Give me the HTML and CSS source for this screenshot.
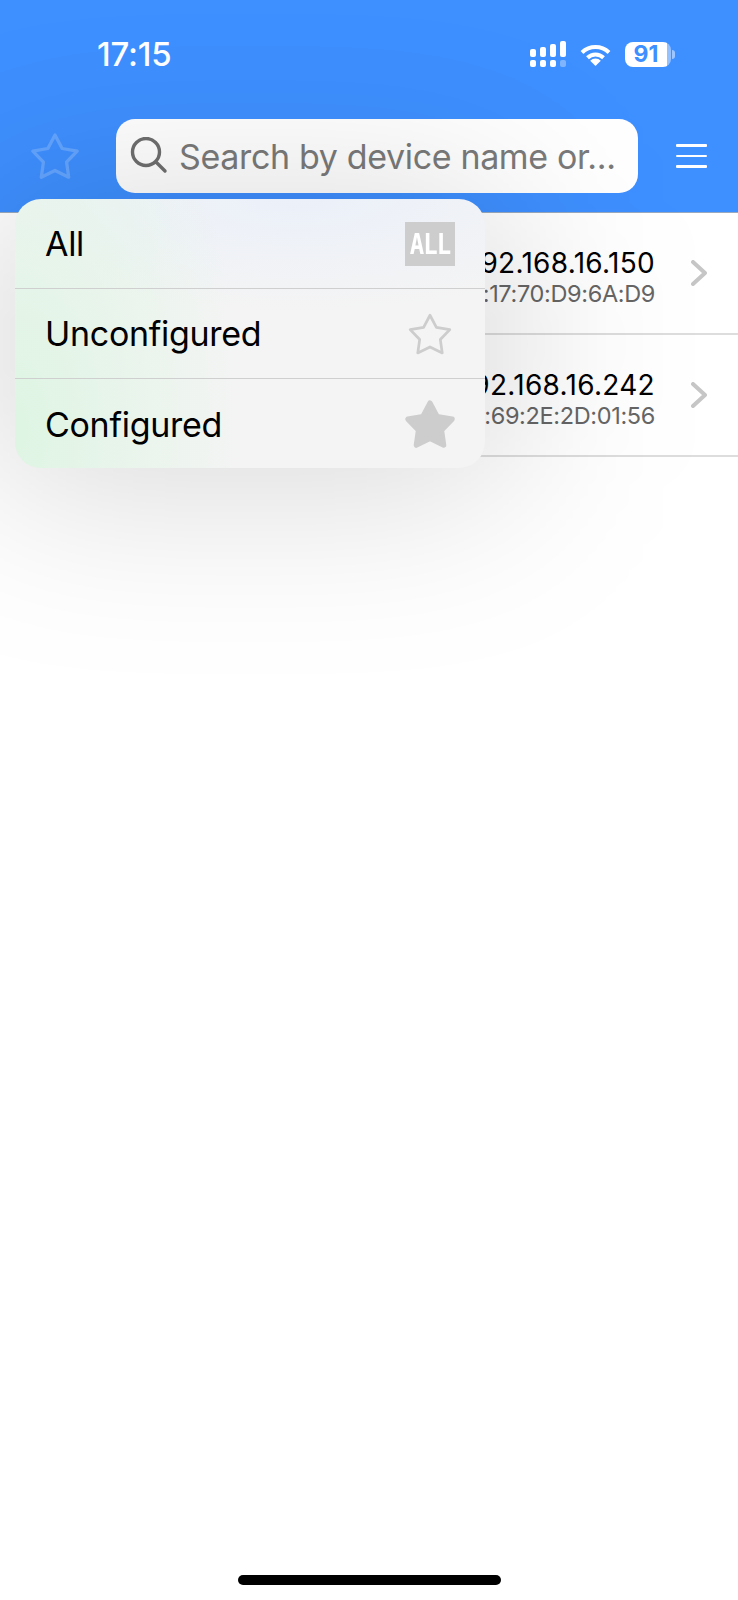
FILE: index.html
```html
<!DOCTYPE html>
<html lang="en">
<head>
  <meta charset="UTF-8" />
  <meta name="viewport" content="width=device-width, initial-scale=1.0" />
  <title>Devices</title>
  <link rel="stylesheet" href="styles.css">
</head>
<body>

<div class="screen">

  <header class="topbar">
    <div class="status">
      <span class="time">17:15</span>
      <div class="status-icons">
        <div class="signal">
          <div class="sig-col"><i class="bar b1"></i><i class="dot"></i></div>
          <div class="sig-col"><i class="bar b2"></i><i class="dot"></i></div>
          <div class="sig-col"><i class="bar b3"></i><i class="dot"></i></div>
          <div class="sig-col"><i class="bar b4"></i><i class="dot off"></i></div>
        </div>
        <svg class="wifi" viewBox="0 0 31 23">
          <path d="M2 9.5A19.5 19.5 0 0 1 29 9.5" />
          <path d="M7.5 14.8A11.5 11.5 0 0 1 23.5 14.8" />
          <path class="wedge" d="M15.5 23L10.2 17.8A7.5 7.5 0 0 1 20.8 17.8Z" />
        </svg>
        <div class="battery"><span>91</span></div>
      </div>
    </div>

    <div class="toolbar">
      <svg class="star-btn" viewBox="0 0 24 24">
        <polygon points="12,3 15.06,8.79 21.51,9.91 16.95,14.61 17.88,21.09 12,18.2 6.12,21.09 7.05,14.61 2.49,9.91 8.94,8.79" />
      </svg>
      <div class="search">
        <svg class="search-icon" viewBox="0 0 38 38">
          <circle cx="16" cy="15" r="13.5" />
          <path d="M26 25L35 34" />
        </svg>
        <span class="placeholder">Search by device name or...</span>
      </div>
      <div class="burger"><i></i><i></i><i></i></div>
    </div>
  </header>

  <!-- device list, the start of each row sits behind the menu -->
  <main class="devices">
    <div class="device">
      <div class="device-info">
        <div class="ip">192.168.16.150</div>
        <div class="mac">:17:70:D9:6A:D9</div>
      </div>
      <svg class="chevron" viewBox="0 0 16 26"><path d="M2 2L14 13L2 24" /></svg>
    </div>
    <div class="device">
      <div class="device-info">
        <div class="ip">192.168.16.242</div>
        <div class="mac">:69:2E:2D:01:56</div>
      </div>
      <svg class="chevron" viewBox="0 0 16 26"><path d="M2 2L14 13L2 24" /></svg>
    </div>
  </main>

  <div class="home-bar"></div>

  <!-- filter popup -->
  <div class="menu-shadow"></div>
  <div class="menu">
    <div class="menu-row">
      <span>All</span>
      <span class="all-icon"><span>ALL</span></span>
    </div>
    <div class="menu-row">
      <span>Unconfigured</span>
      <svg class="star-outline" viewBox="0 0 24 24">
        <polygon points="12,3 15.06,8.79 21.51,9.91 16.95,14.61 17.88,21.09 12,18.2 6.12,21.09 7.05,14.61 2.49,9.91 8.94,8.79" />
      </svg>
    </div>
    <div class="menu-row">
      <span>Configured</span>
      <svg class="star-solid" viewBox="0 0 24 24">
        <polygon points="12,3 15.06,8.79 21.51,9.91 16.95,14.61 17.88,21.09 12,18.2 6.12,21.09 7.05,14.61 2.49,9.91 8.94,8.79" />
      </svg>
    </div>
  </div>

</div>

</body>
</html>
```

FILE: styles.css
```css
*       { box-sizing:border-box; margin:0; padding:0; }
body    { font-family:Inter,'Noto Sans',sans-serif; background:#fff; color:#000; }
.screen { position:relative; display:flex; flex-direction:column; height:1600px; overflow:hidden; }

/* top bar */
.topbar { height:213px; background:#3e8fff; border-bottom:1px solid #9aa9bd; }
.status { display:flex; justify-content:space-between; align-items:center; height:110px; padding:0 67px 2px 97px; }
.time   { color:#fff; font-size:33px; font-weight:500; letter-spacing:-.2px; }
.status-icons { display:flex; align-items:center; }

.signal   { display:flex; gap:4px; margin-right:14px; }
.sig-col  { display:flex; flex-direction:column; justify-content:flex-end; width:6px; height:26px; gap:3px; }
.sig-col i { display:block; background:#fff; border-radius:2px; }
.bar      { width:6px; }
.b1       { height:8px; }
.b2       { height:10px; }
.b3       { height:13px; }
.b4       { height:16px; }
.dot      { width:6px; height:7px; }
.sig-col i.off { background:rgba(255,255,255,.35); }

.wifi        { width:31px; height:23px; margin-right:14px; }
.wifi path   { fill:none; stroke:#fff; stroke-width:4; }
.wifi .wedge { fill:#fff; stroke:none; }

.battery { position:relative; width:46px; height:25px; border-radius:8px; display:flex; align-items:center;
           background:linear-gradient(90deg,#fff 0 42px,rgba(255,255,255,.45) 42px); }
.battery::after { content:''; position:absolute; left:47px; top:8px; width:3px; height:9px;
                  border-radius:0 3px 3px 0; background:rgba(255,255,255,.5); }
.battery span { width:42px; text-align:center; color:#3e8fff; font-size:23px; font-weight:700; line-height:25px; }

.toolbar  { display:flex; align-items:center; height:74px; margin-top:9px; padding:0 31px 0 0; }
.star-btn { width:56px; height:56px; margin:0 33px 0 27px; flex:none; }
.star-btn polygon { fill:none; stroke:rgba(255,255,255,.2); stroke-width:1.4; stroke-linejoin:round; }

.search { display:flex; align-items:center; width:522px; height:74px; background:#fff; border-radius:19px; padding-left:14px; flex:none; }
.search-icon { width:38px; height:38px; flex:none; }
.search-icon circle, .search-icon path { fill:none; stroke:#6f6f6f; stroke-width:3.4; stroke-linecap:round; }
.placeholder { margin-left:11px; color:#7a7a7a; font-size:34px; white-space:nowrap; letter-spacing:-.35px; }

.burger   { display:flex; flex-direction:column; gap:8px; width:31px; margin-left:38px; }
.burger i { display:block; height:2.5px; background:#fff; border-radius:1px; }

/* device rows */
.devices { flex:1; }
.device  { display:flex; align-items:center; justify-content:flex-end; height:122px; margin-left:30px; border-bottom:2px solid #ddd;
           padding:0 31px 0 0; }
.device-info { text-align:right; margin:8px 36px 0 0; }
.ip      { font-size:28px; line-height:34px; letter-spacing:.3px; }
.mac     { font-size:23.5px; line-height:28px; letter-spacing:-.35px; color:#666; }
.chevron { width:16px; height:26px; }
.chevron path { fill:none; stroke:#c6c6c6; stroke-width:4; stroke-linecap:round; stroke-linejoin:round; }

.home-bar { width:263px; height:10px; margin:0 auto 15px; background:#000; border-radius:5px; }

/* popup */
.menu-shadow { position:absolute; left:-15px; top:194px; width:530px; height:300px; border-radius:60px;
               background:rgba(0,0,0,.145); filter:blur(90px); }
.menu { position:absolute; left:15px; top:199px; width:470px; height:269px; border-radius:26px;
        background:
          radial-gradient(ellipse 230px 420px at 0 85%,#def5e3,rgba(222,245,227,0)),
          radial-gradient(ellipse 360px 110px at 60% 0,#ebf0f9,rgba(235,240,249,0)),
          #f4f4f4; }
.menu-row { display:flex; justify-content:space-between; align-items:center; height:90px; padding:0 30px 0 30px;
            font-size:34px; letter-spacing:-.3px; }
.menu-row:not(:last-child) { border-bottom:1px solid #cfcfcf; }

.all-icon { display:block; width:50px; height:44px; background:#cdcdcd; color:#fff; text-align:center;
            font-family:'DejaVu Sans Mono',monospace; font-weight:700; font-size:24px; line-height:44px; letter-spacing:-1px; }
.all-icon span { display:inline-block; transform:scaleY(1.2); }
.star-outline { width:50px; height:50px; }
.star-outline polygon { fill:none; stroke:#cdcdcd; stroke-width:1.3; stroke-linejoin:round; }
.star-solid   { width:56px; height:56px; margin-right:-3px; }
.star-solid polygon { fill:#cdcdcd; stroke:#cdcdcd; stroke-width:2.2; stroke-linejoin:round; }
```
